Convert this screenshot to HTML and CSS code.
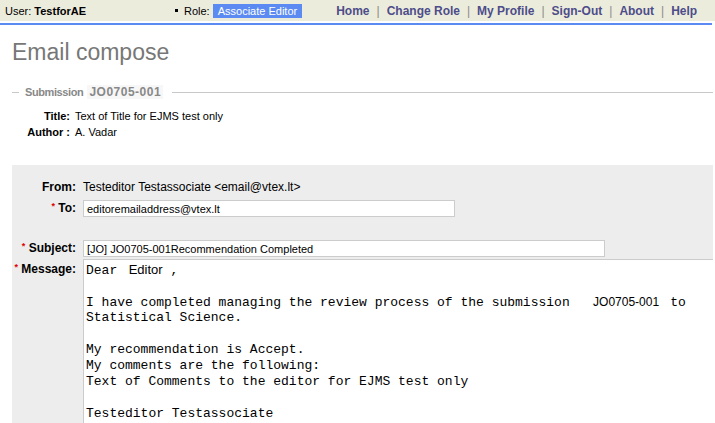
FILE: index.html
```html
<!DOCTYPE html>
<html lang="en">
<head>
<meta charset="utf-8">
<title>Email compose</title>
<link rel="stylesheet" href="styles.css">
</head>
<body>
<header class="topbar">
  <div class="user">User: <b>TestforAE</b></div>
  <div class="role"><span class="bullet"></span><span>Role:</span><span class="badge">Associate Editor</span></div>
  <nav class="menu">
    <a href="#">Home</a><span class="sep">|</span>
    <a href="#">Change Role</a><span class="sep">|</span>
    <a href="#">My Profile</a><span class="sep">|</span>
    <a href="#">Sign-Out</a><span class="sep">|</span>
    <a href="#">About</a><span class="sep">|</span>
    <a href="#">Help</a>
  </nav>
</header>
<div class="accent"></div>
<main class="page">
  <h1 class="title">Email compose</h1>
  <section class="submission">
    <div class="section-head"><span class="legend"><span class="legend-word">Submission</span> <span class="code">JO0705-001</span></span></div>
    <dl class="meta">
      <dt>Title:</dt><dd>Text of Title for EJMS test only</dd>
      <dt>Author :</dt><dd>A. Vadar</dd>
    </dl>
  </section>
  <form class="compose">
    <div class="label row-from">From:</div>
    <div class="value row-from">Testeditor Testassociate &lt;email@vtex.lt&gt;</div>
    <div class="label row-to"><span class="req">*</span> To:</div>
    <div class="value row-to"><input class="field field-to" type="text" value="editoremailaddress@vtex.lt"></div>
    <div class="label row-subject"><span class="req">*</span> Subject:</div>
    <div class="value row-subject"><input class="field field-subject" type="text" value="[JO] JO0705-001Recommendation Completed"></div>
    <div class="label row-message"><span class="req">*</span> Message:</div>
    <div class="value row-message">
      <div class="message" role="textbox">
        <div class="ln"><span>Dear </span><span class="sans"> Editor</span><span> ,</span></div>
        <div class="ln"></div>
        <div class="ln"><span>I have completed managing the review process of the submission   </span><span class="sans sm">JO0705-001 </span><span> to</span></div>
        <div class="ln">Statistical Science.</div>
        <div class="ln"></div>
        <div class="ln">My recommendation is Accept.</div>
        <div class="ln">My comments are the following:</div>
        <div class="ln">Text of Comments to the editor for EJMS test only</div>
        <div class="ln"></div>
        <div class="ln">Testeditor Testassociate</div>
      </div>
    </div>
  </form>
</main>
</body>
</html>
```

FILE: styles.css
```css
html, body {
  margin: 0;
  padding: 0;
  background: #fff;
}
body {
  font-family: "Liberation Sans", Arial, sans-serif;
  color: #000;
  overflow: hidden;
}

/* top bar */
.topbar {
  display: flex;
  align-items: center;
  height: 21px;
  background: #ECECDC;
  font-size: 11px;
  padding-left: 5px;
}
.user {
  flex: 0 0 170px;
}
.role {
  display: flex;
  align-items: center;
}
.bullet {
  display: inline-block;
  width: 3px;
  height: 3px;
  background: #000;
  margin-right: 6px;
}
.badge {
  display: inline-block;
  background: #5B8BF2;
  color: #fff;
  height: 14px;
  line-height: 14px;
  padding: 0 5px;
  margin-left: 3px;
}
.menu {
  display: flex;
  align-items: center;
  margin-left: 34px;
  font-size: 12px;
  font-weight: bold;
}
.menu a {
  color: #4D4D8A;
  text-decoration: none;
}
.sep {
  color: #8a8a8a;
  font-weight: normal;
  margin: 0 7px;
}
.accent {
  margin-top: 2px;
  width: 712px;
  height: 2px;
  background: #5B8BF2;
}

/* page */
.page {
  padding: 0 2px 0 12px;
}
.title {
  margin: 14px 0 0;
  font-size: 23px;
  line-height: 26px;
  font-weight: normal;
  color: #777;
}
.section-head {
  display: flex;
  align-items: center;
  margin-top: 20px;
  height: 14px;
}
.section-head::before {
  content: "";
  width: 7px;
  height: 1px;
  background: #c8c8c8;
}
.section-head::after {
  content: "";
  flex: 1;
  height: 1px;
  background: #c8c8c8;
}
.legend {
  padding: 0 9px 0 6px;
  font-size: 11px;
  font-weight: bold;
  color: #888;
}
.legend-word {
  letter-spacing: -0.4px;
}
.code {
  font-size: 12px;
  letter-spacing: 0.5px;
  background: #f7f7f7;
  padding: 0 2px;
  margin-left: 1px;
}
.meta {
  display: grid;
  grid-template-columns: 58px 1fr;
  column-gap: 5px;
  margin: 9px 0 0;
  font-size: 11px;
  line-height: 16px;
}
.meta dt {
  text-align: right;
  font-weight: bold;
}
.meta dd {
  margin: 0;
}

/* compose form */
.compose {
  display: grid;
  grid-template-columns: 71px 1fr;
  box-sizing: border-box;
  margin-top: 25px;
  padding-top: 14px;
  background: #EDEDED;
  height: 258px;
  align-items: start;
  align-content: start;
}
.label {
  text-align: right;
  padding-right: 7px;
  font-size: 12px;
  font-weight: bold;
  line-height: 12px;
}
.value {
  font-size: 12px;
}
.row-from.label, .row-from.value {
  line-height: 16px;
}
.row-to {
  margin-top: 5px;
}
.row-subject {
  margin-top: 23px;
}
.row-message {
  margin-top: 2px;
}
.row-message.label {
  margin-top: 4px;
}
.req {
  color: #e00000;
  font-size: 9px;
  font-weight: bold;
  vertical-align: 3px;
}
.field {
  display: block;
  box-sizing: border-box;
  height: 17px;
  margin: 0;
  padding: 0 3px;
  border: 1px solid #cccccc;
  background: #fff;
  font-family: "Liberation Sans", Arial, sans-serif;
  font-size: 11px;
  color: #000;
  outline: none;
}
.field-to {
  width: 372px;
}
.field-subject {
  width: 522px;
}
.message {
  box-sizing: border-box;
  height: 164px;
  border-top: 1px solid #cccccc;
  border-left: 1px solid #cccccc;
  background: #fff;
  padding: 2px 2px 0;
  font-family: "Liberation Mono", "Courier New", monospace;
  font-size: 13px;
  line-height: 16px;
  overflow: hidden;
}
.ln {
  height: 16px;
  white-space: pre;
}
.sans {
  font-family: "Liberation Sans", Arial, sans-serif;
  font-size: 13px;
}
.sans.sm {
  font-size: 12px;
}
```
